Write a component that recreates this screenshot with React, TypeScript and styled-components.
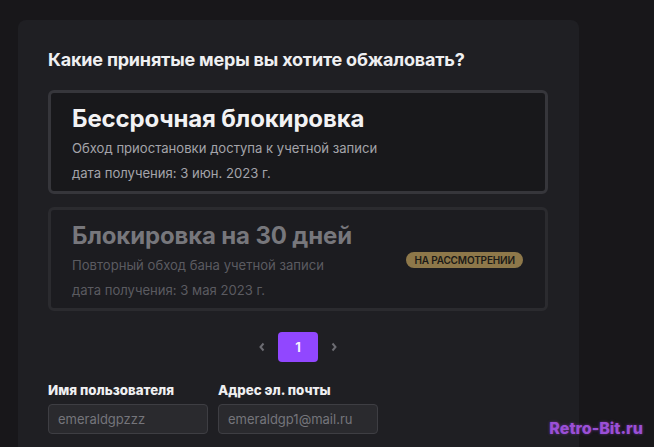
import React from "react";
import styled, { createGlobalStyle } from "styled-components";

const Global = createGlobalStyle`
  html, body { margin: 0; padding: 0; background: #18171a; }
  body { font-family: Inter, "Noto Sans", sans-serif; overflow: hidden; }
  * { box-sizing: border-box; }
`;

const Page = styled.div`
  position: relative;
  width: 654px;
  height: 447px;
  padding: 20px 0 0 18px;
  overflow: hidden;
`;

const Panel = styled.div`
  width: 561px;
  height: 460px;
  background: #1f1f23;
  border-radius: 8px;
  padding: 28px 30px 0 30px;
  display: flex;
  flex-direction: column;
`;

const Heading = styled.h2`
  margin: 0 0 18px 0;
  font-size: 18px;
  line-height: 24px;
  font-weight: 700;
  letter-spacing: -0.2px;
  color: #efeff1;
`;

const CardList = styled.div`
  display: flex;
  flex-direction: column;
  gap: 13px;
  width: 500px;
`;

const Card = styled.div<{ $muted?: boolean }>`
  height: 104px;
  border: 3px solid ${(p) => (p.$muted ? "#2b2b2f" : "#36363b")};
  border-radius: 6px;
  background: ${(p) => (p.$muted ? "#1c1c20" : "#18181b")};
  padding: 11px 21px 0 21px;
  display: flex;
  align-items: center;
  justify-content: space-between;
`;

const CardBody = styled.div`
  display: flex;
  flex-direction: column;
  align-self: flex-start;
`;

const CardTitle = styled.div<{ $muted?: boolean }>`
  font-size: 24px;
  line-height: 30px;
  font-weight: 700;
  letter-spacing: -0.15px;
  color: ${(p) => (p.$muted ? "#77777c" : "#f2f2f4")};
  margin-bottom: 2px;
`;

const CardText = styled.div<{ $muted?: boolean }>`
  font-size: 13.1px;
  line-height: 25px;
  color: ${(p) => (p.$muted ? "#5b5b60" : "#a4a4aa")};
`;

const Badge = styled.span`
  margin-right: 1px;
  margin-top: -10px;
  background: #8e784a;
  color: #1b1a17;
  font-size: 10px;
  font-weight: 600;
  line-height: 16px;
  padding: 0 8px;
  border-radius: 9px;
  text-transform: uppercase;
  letter-spacing: -0.15px;
`;

const Pager = styled.div`
  width: 500px;
  display: flex;
  justify-content: center;
  align-items: center;
  gap: 4px;
  margin-top: 21px;
`;

const Arrow = styled.span`
  width: 24px;
  height: 30px;
  display: flex;
  align-items: center;
  justify-content: center;
  color: #6c6c72;
`;

const PageButton = styled.button`
  width: 40px;
  height: 30px;
  border: none;
  border-radius: 4px;
  background: #9147ff;
  color: #f5eeff;
  font-family: Inter, sans-serif;
  font-weight: 700;
  font-size: 13px;
`;

const Fields = styled.div`
  display: flex;
  gap: 10px;
  margin-top: 20px;
`;

const Field = styled.div`
  display: flex;
  flex-direction: column;
  gap: 6px;
`;

const Label = styled.label`
  font-size: 13.3px;
  line-height: 16px;
  font-weight: 800;
  color: #efeff1;
`;

const Input = styled.div`
  width: 160px;
  height: 30px;
  border: 1px solid #3e3e43;
  border-radius: 4px;
  background: #2a2a2e;
  color: #75757b;
  font-size: 13px;
  line-height: 28px;
  padding: 0 9px;
`;

const Watermark = styled.div`
  position: absolute;
  right: 11px;
  bottom: 9px;
  font-family: Inter, sans-serif;
  font-weight: 800;
  font-size: 16px;
  color: #9a4fd6;
  text-shadow: 0 0 3px rgba(150, 70, 210, 0.6);
`;

const Chevron = ({ dir }: { dir: "l" | "r" }) => (
  <svg width="8" height="10" viewBox="0 0 8 10">
    <path
      d={dir === "l" ? "M5.5 1.5 L2.5 5 L5.5 8.5" : "M2.5 1.5 L5.5 5 L2.5 8.5"}
      fill="none"
      stroke="currentColor"
      strokeWidth="2"
    />
  </svg>
);

export default function App() {
  return (
    <Page>
      <Global />
      <Panel>
        <Heading>Какие принятые меры вы хотите обжаловать?</Heading>
        <CardList>
          <Card>
            <CardBody>
              <CardTitle>Бессрочная блокировка</CardTitle>
              <CardText>Обход приостановки доступа к учетной записи</CardText>
              <CardText>дата получения: 3 июн. 2023 г.</CardText>
            </CardBody>
          </Card>
          <Card $muted>
            <CardBody>
              <CardTitle $muted>Блокировка на 30 дней</CardTitle>
              <CardText $muted>Повторный обход бана учетной записи</CardText>
              <CardText $muted>дата получения: 3 мая 2023 г.</CardText>
            </CardBody>
            <Badge>На рассмотрении</Badge>
          </Card>
        </CardList>
        <Pager>
          <Arrow>
            <Chevron dir="l" />
          </Arrow>
          <PageButton>1</PageButton>
          <Arrow>
            <Chevron dir="r" />
          </Arrow>
        </Pager>
        <Fields>
          <Field>
            <Label>Имя пользователя</Label>
            <Input>emeraldgpzzz</Input>
          </Field>
          <Field>
            <Label>Адрес эл. почты</Label>
            <Input>emeraldgp1@mail.ru</Input>
          </Field>
        </Fields>
      </Panel>
      <Watermark>Retro-Bit.ru</Watermark>
    </Page>
  );
}
